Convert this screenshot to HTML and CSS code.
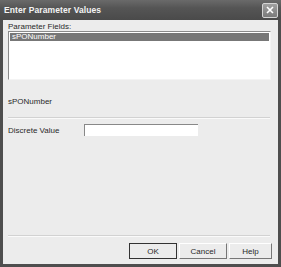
FILE: index.html
```html
<!DOCTYPE html>
<html lang="en">

<head>
    <meta charset="UTF-8">
    <meta name="viewport" content="width=device-width, initial-scale=1.0">
    <title>Enter Parameter Values</title>
    <link rel="stylesheet" href="styles.css">
</head>

<body>
    <div class="dialog">
        <div class="titlebar">
            <span class="title">Enter Parameter Values</span>
            <span class="close">
                <svg width="10" height="10" viewBox="0 0 10 10">
                    <path d="M2 2 L8 8 M8 2 L2 8" stroke="#fff" stroke-width="1.6" fill="none" />
                </svg>
            </span>
        </div>
        <div class="body">
            <div class="label">Parameter Fields:</div>
            <div class="list">
                <div class="item selected">sPONumber</div>
            </div>
            <div class="name">sPONumber</div>
            <div class="sep"></div>
            <div class="row">
                <span class="row-label">Discrete Value</span>
                <span class="input"></span>
            </div>
            <div class="spacer"></div>
            <div class="sep"></div>
            <div class="buttons">
                <span class="btn default">OK</span>
                <span class="btn">Cancel</span>
                <span class="btn help">Help</span>
            </div>
        </div>
    </div>
</body>

</html>
```

FILE: styles.css
```css
body {
    margin: 0;
    padding: 0;
    font-family: "Liberation Sans", Arial, sans-serif;
    font-size: 8px;
    color: #2a2a2a;
}

.dialog {
    width: 281px;
    height: 267px;
    box-sizing: border-box;
    background: #4e4e4e;
    padding: 0 3px 3px 3px;
    display: flex;
    flex-direction: column;
}

.titlebar {
    height: 20px;
    margin: 0 -3px;
    padding: 0 3px 0 4px;
    background: linear-gradient(#6a6a6a, #555 40%, #4a4a4a);
    display: flex;
    align-items: center;
    justify-content: space-between;
}

.title {
    color: #f4f4f4;
    font-size: 8.5px;
    font-weight: bold;
    letter-spacing: 0.1px;
}

.close {
    width: 16px;
    height: 15px;
    box-sizing: border-box;
    border: 1px solid #d4d4d4;
    border-radius: 2px;
    background: linear-gradient(#a0a0a0, #7a7a7a);
    display: flex;
    align-items: center;
    justify-content: center;
}

.body {
    flex: 1;
    background: #ececec;
    padding: 2px 6px 0 5px;
    display: flex;
    flex-direction: column;
}

.label {
    height: 9px;
    line-height: 9px;
}

.list {
    height: 45px;
    margin-right: 1px;
    background: #fff;
    border-top: 1px solid #8a8a8a;
    border-left: 1px solid #8a8a8a;
    border-right: 1px solid #f4f4f4;
    border-bottom: 1px solid #f4f4f4;
    padding: 1px;
}

.item {
    height: 8px;
    line-height: 8px;
    padding-left: 2px;
}

.item.selected {
    background: #777;
    color: #fff;
}

.name {
    margin-top: 17px;
    height: 9px;
    line-height: 9px;
}

.sep {
    margin: 11px 2px 0 0;
    border-top: 1px solid #d2d2d2;
    border-bottom: 1px solid #fafafa;
}

.row {
    margin-top: 5px;
    display: flex;
    align-items: center;
}

.row-label {
    width: 76px;
}

.input {
    width: 114px;
    height: 12px;
    box-sizing: border-box;
    background: #fff;
    border-top: 1px solid #888;
    border-left: 1px solid #888;
}

.spacer {
    flex: 1;
}

.buttons {
    height: 27px;
    display: flex;
    justify-content: flex-end;
    align-items: flex-start;
    padding-top: 6px;
    box-sizing: border-box;
    gap: 2px;
}

.btn {
    width: 48px;
    height: 16px;
    box-sizing: border-box;
    border: 1px solid #fff;
    border-right-color: #777;
    border-bottom-color: #777;
    background: #ececec;
    display: flex;
    align-items: center;
    justify-content: center;
}

.btn.default {
    outline: 1px solid #333;
    outline-offset: -1px;
}

.btn.help {
    width: 43px;
}
```
